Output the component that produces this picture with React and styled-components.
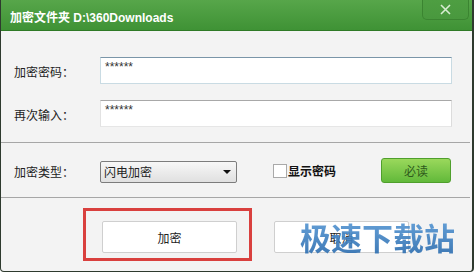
import React from "react";
import styled, { createGlobalStyle } from "styled-components";

const Global = createGlobalStyle`
  html, body { margin: 0; padding: 0; background: #ffffff; }
  body { font-family: "Noto Sans CJK SC", "Liberation Sans", sans-serif; }
  * { box-sizing: border-box; }
`;

const Window = styled.div`
  position: relative;
  width: 474px;
  height: 272px;
  background: #f3f3f3;
  border-left: 1px solid #2e3a2e;
  border-right: 2px solid #2e3a2e;
  border-bottom: 1px solid #2e3a2e;
  border-radius: 0 0 4px 4px;
  display: flex;
  flex-direction: column;
  overflow: hidden;
`;

const TitleBar = styled.div`
  position: relative;
  height: 31px;
  flex: none;
  background: linear-gradient(#57a64a, #3f9235);
  border-bottom: 1px solid #2f7a27;
  display: flex;
  align-items: center;
  padding-left: 9px;
  color: #fff;
  font-size: 12px;
  font-weight: bold;
`;

const TitleText = styled.span`
  font-family: "Liberation Sans", "Noto Sans CJK SC", sans-serif;
  font-weight: bold;
  letter-spacing: 0;
  margin-top: 2px;
`;

const CloseButton = styled.div`
  position: absolute;
  right: 3px;
  top: 0;
  width: 47px;
  height: 20px;
  border: 1px solid #3b8431;
  border-top: none;
  border-radius: 0 0 5px 5px;
  background: linear-gradient(#4e9e42, #49983e);
  display: flex;
  align-items: center;
  justify-content: center;
`;

const FieldSection = styled.div`
  display: flex;
  flex-direction: column;
  gap: 16px;
  padding: 26px 0 15px 13px;
`;

const Row = styled.div`
  display: flex;
  align-items: center;
  height: ${(p) => p.$h || 27}px;
`;

const Label = styled.span`
  width: 86px;
  flex: none;
  font-size: 12px;
  color: #222;
  margin-top: 2px;
`;

const Input = styled.div`
  width: 352px;
  height: 27px;
  background: #fff;
  border: 1px solid #c9dbe3;
  border-top-color: ${(p) => (p.$focus ? "#7a95a8" : "#a8a8a8")};
  padding: 2px 4px;
  font-family: "Liberation Sans", sans-serif;
  font-size: 12px;
  color: #333;
  line-height: 14px;
  ${(p) => (!p.$focus ? "border-left-color:#e2e2e2;border-right-color:#dcdcdc;border-bottom-color:#e6e6e6;" : "")}
`;

const Divider = styled.div`
  height: 1px;
  flex: none;
  background: #a6a6a6;
  margin-right: 2px;
`;

const OptionSection = styled.div`
  padding: 15px 0 14px 13px;
`;

const Select = styled.div`
  width: 137px;
  height: 22px;
  margin-top: 2px;
  border: 1px solid #7c7c7c;
  border-radius: 2px;
  background: linear-gradient(#f7f7f7, #e0e0e0);
  display: flex;
  align-items: center;
  justify-content: space-between;
  padding: 0 5px 0 3px;
  font-size: 12px;
  color: #222;
`;

const Arrow = styled.span`
  width: 0;
  height: 0;
  border-left: 4px solid transparent;
  border-right: 4px solid transparent;
  border-top: 4px solid #111;
`;

const CheckWrap = styled.label`
  display: flex;
  align-items: center;
  margin-left: 36px;
  font-size: 12px;
  font-weight: bold;
  color: #111;
`;

const Box = styled.span`
  width: 14px;
  height: 14px;
  background: #fff;
  border: 1px solid #a9a9a9;
  margin-right: 1px;
`;

const GreenButton = styled.div`
  margin-left: 45px;
  width: 70px;
  height: 25px;
  border: 1px solid #4f9f2c;
  border-radius: 3px;
  background: linear-gradient(#9ad85c, #62b93a);
  display: flex;
  align-items: center;
  justify-content: center;
  font-size: 12px;
  color: #2f5a1c;
`;

const Footer = styled.div`
  display: flex;
  align-items: flex-start;
  padding: 10px 0 0 82px;
`;

const Highlight = styled.div`
  border: 3px solid #d9403e;
  padding: 10px 12px 5px 16px;
`;

const Button = styled.div`
  width: 135px;
  height: 32px;
  background: #fff;
  border: 1px solid #cfcfcf;
  border-radius: 2px;
  display: flex;
  align-items: center;
  justify-content: center;
  font-size: 12px;
  color: #222;
  margin-top: ${(p) => p.$mt || 0}px;
  margin-left: ${(p) => p.$ml || 0}px;
`;

const Watermark = styled.div`
  position: absolute;
  left: 299px;
  top: 219px;
  font-family: "Noto Sans CJK SC", sans-serif;
  font-size: 31px;
  font-weight: bold;
  line-height: 36px;
  letter-spacing: 0px;
  background: linear-gradient(#5a9ad6, #2f6fb0);
  -webkit-background-clip: text;
  background-clip: text;
  color: transparent;
  opacity: 0.92;
`;

export default function App() {
  return (
    <>
      <Global />
      <Window>
        <TitleBar>
          <TitleText>加密文件夹 D:\360Downloads</TitleText>
          <CloseButton>
            <svg width="11" height="11" viewBox="0 0 11 11">
              <path d="M1 1 L10 10 M10 1 L1 10" stroke="#d8ecd2" strokeWidth="1.6" />
            </svg>
          </CloseButton>
        </TitleBar>
        <FieldSection>
          <Row>
            <Label>加密密码：</Label>
            <Input $focus>******</Input>
          </Row>
          <Row>
            <Label>再次输入：</Label>
            <Input>******</Input>
          </Row>
        </FieldSection>
        <Divider />
        <OptionSection>
          <Row $h={25}>
            <Label>加密类型：</Label>
            <Select>
              <span>闪电加密</span>
              <Arrow />
            </Select>
            <CheckWrap>
              <Box />
              显示密码
            </CheckWrap>
            <GreenButton>必读</GreenButton>
          </Row>
        </OptionSection>
        <Divider />
        <Footer>
          <Highlight>
            <Button>加密</Button>
          </Highlight>
          <Button $mt={13} $ml={22}>取消</Button>
        </Footer>
        <Watermark>极速下载站</Watermark>
      </Window>
    </>
  );
}
